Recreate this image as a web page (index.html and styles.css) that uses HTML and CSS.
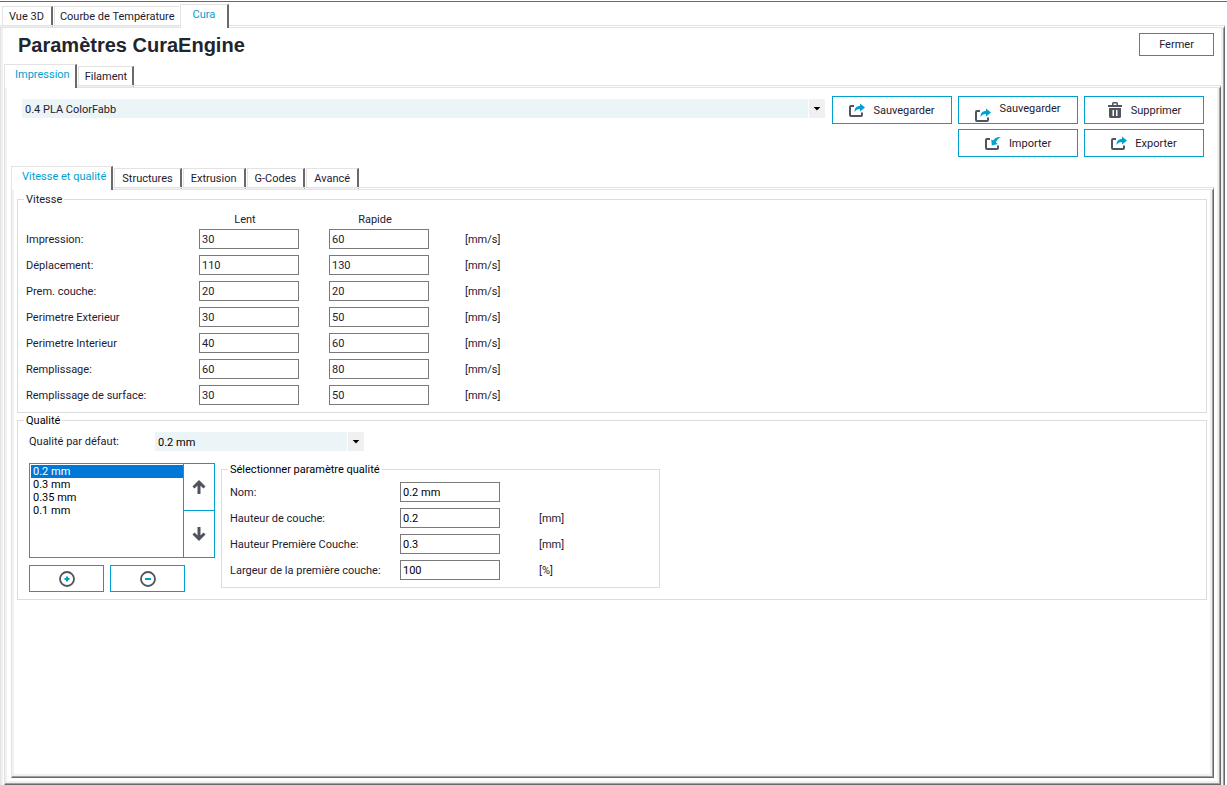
FILE: index.html
```html
<!DOCTYPE html>
<html lang="fr">
<head>
<meta charset="utf-8">
<title>Paramètres CuraEngine</title>
<link rel="stylesheet" href="styles.css">
</head>
<body>
<svg class="defs" aria-hidden="true">
  <symbol id="box" viewBox="0 0 16 14">
    <path d="M5 3H2Q1 3 1 4V12Q1 13 2 13H12Q13 13 13 12V9.500" fill="none" stroke="#50545f" stroke-width="2"/>
  </symbol>
  <symbol id="export" viewBox="0 0 16 14">
    <use href="#box"/>
    <path d="M5.500 9C5.500 5 7.500 3 11 3V0.500L16 4.500L11 8.500V6C8.500 6 6.800 7 5.500 9Z" fill="#00a0d0"/>
  </symbol>
  <symbol id="import" viewBox="0 0 16 14">
    <use href="#box"/>
    <path d="M16 1C11.500 0.800 9.500 2 8.500 4.500L6.200 3.600L6.800 9.500L12.800 8L10.900 6.400C11.800 3.800 13.500 2.300 16 1Z" fill="#00a0d0"/>
  </symbol>
</svg>
<div class="app">
  <div class="tabs" role="tablist">
    <button class="tab" role="tab">Vue 3D</button>
    <button class="tab" role="tab">Courbe de Température</button>
    <button class="tab active" role="tab" aria-selected="true">Cura</button>
  </div>
  <main class="pane outer">
    <header class="header">
      <h1>Paramètres CuraEngine</h1>
      <button class="btn close">Fermer</button>
    </header>
    <div class="tabs" role="tablist">
      <button class="tab active" role="tab" aria-selected="true">Impression</button>
      <button class="tab" role="tab">Filament</button>
    </div>
    <section class="pane middle">
      <div class="toolbar">
        <div class="combo">
          <select aria-label="Profil"><option>0.4 PLA ColorFabb</option></select>
          <svg class="caret" viewBox="0 0 17 19" aria-hidden="true"><path d="M5 8h7L8.500 11.500Z"/></svg>
        </div>
        <div class="actions">
          <button class="btn"><svg class="icon"><use href="#export"/></svg>Sauvegarder</button>
          <button class="btn low"><svg class="icon"><use href="#export"/></svg><span>Sauvegarder</span></button>
          <button class="btn"><svg class="icon" viewBox="0 0 16 16"><path fill="#50545f" fill-rule="evenodd" d="M1 3H5V1.500Q5 0 6.500 0H9.500Q11 0 11 1.500V3H15V5H1ZM6.500 3H9.500V1.500H6.500ZM2 6H14V14.500Q14 16 12.500 16H3.500Q2 16 2 14.500ZM5.500 8V14H7V8ZM9 8V14H10.500V8Z"/></svg>Supprimer</button>
          <button class="btn second-row"><svg class="icon"><use href="#import"/></svg>Importer</button>
          <button class="btn"><svg class="icon"><use href="#export"/></svg>Exporter</button>
        </div>
      </div>
      <div class="tabs" role="tablist">
        <button class="tab active" role="tab" aria-selected="true">Vitesse et qualité</button>
        <button class="tab" role="tab">Structures</button>
        <button class="tab" role="tab">Extrusion</button>
        <button class="tab" role="tab">G-Codes</button>
        <button class="tab" role="tab">Avancé</button>
      </div>
      <section class="pane inner">
        <fieldset>
          <legend>Vitesse</legend>
          <div class="speeds">
            <span></span><span class="head">Lent</span><span class="head">Rapide</span><span></span>
            <label for="s1">Impression:</label><input id="s1" value="30"><input aria-label="Impression, rapide" value="60"><span class="unit">[mm/s]</span>
            <label for="s2">Déplacement:</label><input id="s2" value="110"><input aria-label="Déplacement, rapide" value="130"><span class="unit">[mm/s]</span>
            <label for="s3">Prem. couche:</label><input id="s3" value="20"><input aria-label="Prem. couche, rapide" value="20"><span class="unit">[mm/s]</span>
            <label for="s4">Perimetre Exterieur</label><input id="s4" value="30"><input aria-label="Perimetre Exterieur, rapide" value="50"><span class="unit">[mm/s]</span>
            <label for="s5">Perimetre Interieur</label><input id="s5" value="40"><input aria-label="Perimetre Interieur, rapide" value="60"><span class="unit">[mm/s]</span>
            <label for="s6">Remplissage:</label><input id="s6" value="60"><input aria-label="Remplissage, rapide" value="80"><span class="unit">[mm/s]</span>
            <label for="s7">Remplissage de surface:</label><input id="s7" value="30"><input aria-label="Remplissage de surface, rapide" value="50"><span class="unit">[mm/s]</span>
          </div>
        </fieldset>
        <fieldset class="quality">
          <legend>Qualité</legend>
          <div class="default-row">
            <label for="default">Qualité par défaut:</label>
            <div class="combo">
              <select id="default"><option>0.2 mm</option></select>
              <svg class="caret" viewBox="0 0 17 19" aria-hidden="true"><path d="M5 8h7L8.500 11.500Z"/></svg>
            </div>
          </div>
          <div class="quality-body">
            <div class="quality-list">
              <div class="list-row">
                <select class="list" size="7" aria-label="Qualités">
                  <option selected>0.2 mm</option>
                  <option>0.3 mm</option>
                  <option>0.35 mm</option>
                  <option>0.1 mm</option>
                </select>
                <div class="movers">
                  <button class="btn" aria-label="Monter"><svg class="icon" viewBox="0 0 16 16"><path d="M8 15V3M2.500 8.500L8 3L13.500 8.500" fill="none" stroke="#50545f" stroke-width="3"/></svg></button>
                  <button class="btn" aria-label="Descendre"><svg class="icon" viewBox="0 0 16 16"><path d="M8 1V13M2.500 7.500L8 13L13.500 7.500" fill="none" stroke="#50545f" stroke-width="3"/></svg></button>
                </div>
              </div>
              <div class="edit-row">
                <button class="btn" aria-label="Ajouter"><svg class="icon" viewBox="0 0 16 16"><circle cx="8" cy="8" r="7" fill="none" stroke="#50545f" stroke-width="1.800"/><path d="M5.500 8H10.500M8 5.500V10.500" stroke="#00a0d0" stroke-width="2"/></svg></button>
                <button class="btn" aria-label="Retirer"><svg class="icon" viewBox="0 0 16 16"><circle cx="8" cy="8" r="7" fill="none" stroke="#50545f" stroke-width="1.800"/><path d="M5 8H11" stroke="#00a0d0" stroke-width="2"/></svg></button>
              </div>
            </div>
            <fieldset class="params">
              <legend>Sélectionner paramètre qualité</legend>
              <div class="param-grid">
                <label for="q1">Nom:</label><input id="q1" value="0.2 mm"><span></span>
                <label for="q2">Hauteur de couche:</label><input id="q2" value="0.2"><span class="unit">[mm]</span>
                <label for="q3">Hauteur Première Couche:</label><input id="q3" value="0.3"><span class="unit">[mm]</span>
                <label for="q4">Largeur de la première couche:</label><input id="q4" value="100"><span class="unit">[%]</span>
              </div>
            </fieldset>
          </div>
        </fieldset>
      </section>
    </section>
  </main>
</div>
</body>
</html>
```
FILE: styles.css
```css
* { box-sizing: border-box; }

body {
  margin: 0;
  background: #fff;
  color: #1e2030;
  font: 11px/13px Roboto, "Liberation Sans", sans-serif;
}

button, input, select { font: inherit; color: inherit; border-radius: 0; }

.defs { position: absolute; width: 0; height: 0; }

.app {
  display: flex;
  flex-direction: column;
  min-height: 100vh;
  padding: 1px 2px 0 0;
}
.app::before {
  content: "";
  height: 1px;
  margin-right: -2px;
  background: #696969;
}

/* Tab strips */
.tabs { display: flex; align-items: flex-end; gap: 1px; }
.tab {
  height: 21px;
  margin-bottom: -2px;
  padding: 0 7px 0 6px;
  background: #fff;
  border: 1px solid #e3e3e3;
  border-right: 2px solid #696969;
  border-bottom: 2px solid #f0f0f0;
  white-space: nowrap;
}
.tab.active {
  height: 24px;
  padding: 0 5px 4px 10px;
  margin-bottom: -3px;
  border-bottom: 0;
  background: #fff;
  color: #00a0d0;
  z-index: 1;
}

/* Bevelled tab pages */
.pane {
  display: flex;
  flex-direction: column;
  border: 1px solid #696969;
  border-top: 3px double #e3e3e3;
  border-left-color: #e3e3e3;
  box-shadow: inset -1px -1px #a0a0a0, inset -3px -3px #f0f0f0, inset 2px 0 #f0f0f0;
}
.outer {
  flex: 1;
  padding: 0 3px;
  border-bottom: 0;
  box-shadow: inset -1px 0 #a0a0a0, inset -3px 0 #f0f0f0, inset 2px 0 #f0f0f0;
}
.app > .tabs { height: 23px; padding-left: 2px; }
.app > .tabs .tab:nth-child(2) { border-right: 0; padding: 0 4px 0 5px; }
.app > .tabs .active { padding: 0 12px 5px; }
.outer > .tabs .tab:not(.active) { padding-right: 5px; }
.middle { flex: 1; padding: 8px 6px 6px; }
.middle > .tabs .tab:not(.active) { padding: 0 7px; }
.inner { flex: 1; padding: 3px 6px 10px 5px; }

.header {
  display: flex;
  justify-content: space-between;
  align-items: center;
  height: 33px;
  padding: 0 7px 0 14px;
  margin-bottom: 3px;
}
h1 {
  margin: 0;
  color: #22252e;
  font: bold 20px/24px "Liberation Sans", Arial, sans-serif;
}

.btn {
  display: flex;
  align-items: center;
  justify-content: center;
  gap: 8px;
  height: 28px;
  padding: 0;
  background: #fff;
  border: 1px solid #00a0d0;
}
.close { width: 75px; height: 23px; }
.icon { flex: none; width: 16px; height: 16px; }

/* Profile selector and its actions */
.toolbar { display: flex; align-items: flex-start; gap: 7px; padding: 0 10px 9px 11px; }
.toolbar .combo { flex: 1; margin-top: 3px; }
.actions { display: grid; grid-template-columns: repeat(3, 120px); gap: 5px 6px; }
.second-row { grid-column: 2; }
.low { align-items: flex-end; }
.low span { padding-bottom: 8px; }

.combo { display: grid; }
.combo select {
  grid-area: 1 / 1;
  width: 100%;
  height: 19px;
  padding: 1px 20px 0 3px;
  appearance: none;
  background: #ebf4f7;
  border: 0;
}
.caret {
  grid-area: 1 / 1;
  justify-self: end;
  width: 17px;
  height: 19px;
  background: #f0f0f0;
  border-left: 1px solid #fff;
  pointer-events: none;
}

/* Parameter groups */
fieldset { min-width: 0; margin: 0; padding: 6px 8px 7px; border: 1px solid #dcdcdc; }
legend { margin-left: -2px; padding: 0 2px; }
fieldset input {
  width: 100px;
  height: 20px;
  padding: 0 2px;
  background: #fff;
  border: 1px solid #7a7a7a;
}
.inner > fieldset + fieldset { margin-top: 1px; }
.speeds {
  display: grid;
  grid-template-columns: 143px 100px 100px auto;
  gap: 6px 30px;
  align-items: center;
}
.head { height: 11px; padding-right: 8px; line-height: 15px; text-align: center; }
.unit { padding-left: 6px; }

.quality { color: #000; padding: 5px 11px 7px; }
.quality legend { margin-left: -5px; }
.quality label, .quality .unit { color: #1e2030; }
.default-row { display: grid; grid-template-columns: 126px 209px; align-items: center; }
.quality-body { display: flex; align-items: flex-start; gap: 6px; margin-top: 12px; }
.list-row { display: flex; }
.list {
  width: 154px;
  height: 95px;
  padding: 1px 0 1px 1px;
  background: #fff;
  border: 1px solid #7a7a7a;
  border-right: 0;
  overflow: hidden;
}
.list option { min-height: 13px; height: 13px; padding: 0 2px; }
.list option:checked {
  background: linear-gradient(#0078d7, #0078d7);
  -webkit-text-fill-color: #fff;
}
.movers { display: flex; flex-direction: column; }
.movers .btn { width: 32px; height: 48px; }
.movers .btn + .btn { margin-top: -1px; }
.edit-row { display: flex; gap: 6px; margin-top: 7px; }
.edit-row .btn { width: 75px; height: 27px; }
.params { width: 439px; padding: 6px 8px 7px; }
.params legend { margin-left: -2px; }
.param-grid {
  display: grid;
  grid-template-columns: 170px 100px auto;
  row-gap: 6px;
  align-items: center;
}
.params .unit { padding-left: 39px; }
```
